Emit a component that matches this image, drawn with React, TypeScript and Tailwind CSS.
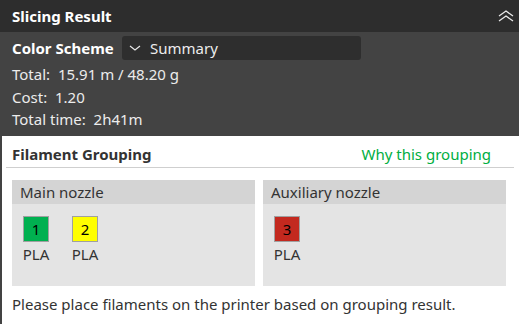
import React from 'react';

type Filament = { id: number; color: string; type: string };

const mainNozzle: Filament[] = [
  { id: 1, color: 'bg-[#00b050]', type: 'PLA' },
  { id: 2, color: 'bg-[#ffff00]', type: 'PLA' },
];

const auxNozzle: Filament[] = [{ id: 3, color: 'bg-[#c3291f]', type: 'PLA' }];

function NozzleBox({ title, items }: { title: string; items: Filament[] }) {
  return (
    <div className="flex-1 h-[106px] bg-[#e4e4e4] flex flex-col">
      <div className="h-[24px] bg-[#d4d4d4] flex items-center pl-2 text-[15px] text-[#333333]">
        {title}
      </div>
      <div className="flex gap-[21px] pl-[10px] pt-3">
        {items.map((f) => (
          <div key={f.id} className="flex flex-col items-center w-[28px]">
            <div
              className={`w-[26px] h-[26px] border border-[#a0a0a0] ${f.color} flex items-center justify-center text-[15px] text-black`}
            >
              {f.id}
            </div>
            <span className="text-[15px] leading-[25px] text-[#333333]">{f.type}</span>
          </div>
        ))}
      </div>
    </div>
  );
}

export default function App() {
  return (
    <div
      className="w-[519px] h-[324px] overflow-hidden flex flex-col bg-[#434343]"
      style={{ fontFamily: '"Noto Sans", sans-serif' }}
    >
      <div className="h-[32px] shrink-0 bg-[#2d2d2d] flex items-center justify-between pl-3 pr-[5px]">
        <span className="text-[15px] font-bold text-white">Slicing Result</span>
        <svg width="16" height="12" viewBox="0 0 16 12" fill="none" stroke="#e8e8e8" strokeWidth="1.3">
          <path d="M1 6 L8 1 L15 6" />
          <path d="M1 11 L8 6 L15 11" />
        </svg>
      </div>

      <div className="h-[104px] shrink-0 px-3 pt-1 text-[#ececec] text-[15px]">
        <div className="flex items-center h-[24px]">
          <span className="font-bold text-white w-[110px]">Color Scheme</span>
          <div className="w-[239px] h-[24px] rounded-[3px] bg-[#2e2e2e] flex items-center pl-[7px]">
            <svg width="12" height="6" viewBox="0 0 12 6" fill="none" stroke="#e8e8e8" strokeWidth="1.2">
              <path d="M1 1 L6 5 L11 1" />
            </svg>
            <span className="ml-[9px]">Summary</span>
          </div>
        </div>
        <div className="mt-[3px] leading-[22.5px]">
          <div>Total:&nbsp; 15.91 m / 48.20 g</div>
          <div>Cost:&nbsp; 1.20</div>
          <div>Total time:&nbsp; 2h41m</div>
        </div>
      </div>

      <div className="flex-1 bg-white ml-[2px] flex flex-col">
        <div className="ml-[4px] mr-[5px] h-[32px] border-b border-[#cfcfcf] flex items-center justify-between pl-[6px] pr-[23px] pt-[6px]">
          <span className="text-[15px] font-bold text-[#333333]">Filament Grouping</span>
          <span className="text-[15px] text-[#00ae42]">Why this grouping</span>
        </div>
        <div className="flex gap-2 pl-[10px] pr-[13px] mt-3">
          <NozzleBox title="Main nozzle" items={mainNozzle} />
          <NozzleBox title="Auxiliary nozzle" items={auxNozzle} />
        </div>
        <div className="pl-[10px] mt-[6px] text-[15px] leading-[24px] text-[#333333]">
          Please place filaments on the printer based on grouping result.
        </div>
      </div>
    </div>
  );
}
